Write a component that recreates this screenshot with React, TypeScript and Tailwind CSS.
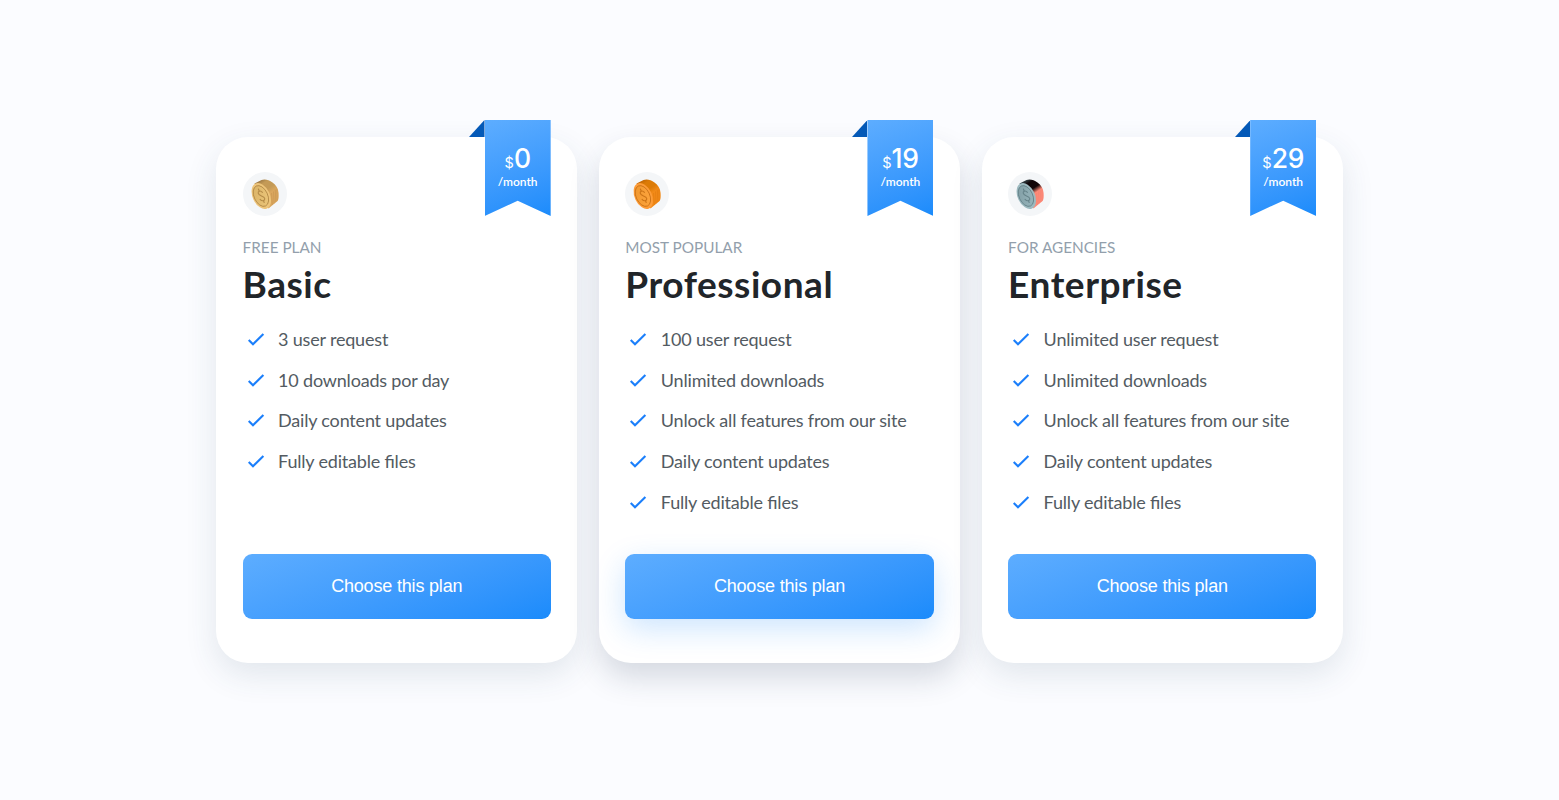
import { useId } from "react";

type CoinTheme = {
  rimStart: string;
  rimMid: string;
  rimEnd: string;
  faceLight: string;
  face: string;
  line: string;
  ridge: string;
  edge: string;
};

type Plan = {
  label: string;
  name: string;
  price: string;
  features: string[];
  coin: CoinTheme;
  featured?: boolean;
};

const plans: Plan[] = [
  {
    label: "FREE PLAN",
    name: "Basic",
    price: "0",
    features: ["3 user request", "10 downloads por day", "Daily content updates", "Fully editable files"],
    coin: { rimStart: "#8d6c3d", rimMid: "#c49a56", rimEnd: "#dba75e", faceLight: "#edc77b", face: "#d9b266", line: "#a87d3c", ridge: "#b48445", edge: "#edc47a" },
  },
  {
    label: "MOST POPULAR",
    name: "Professional",
    price: "19",
    features: ["100 user request", "Unlimited downloads", "Unlock all features from our site", "Daily content updates", "Fully editable files"],
    coin: { rimStart: "#b65f04", rimMid: "#dc7b06", rimEnd: "#f28a18", faceLight: "#ffa640", face: "#ee962d", line: "#c0690f", ridge: "#d26d07", edge: "#fd9c38" },
    featured: true,
  },
  {
    label: "FOR AGENCIES",
    name: "Enterprise",
    price: "29",
    features: ["Unlimited user request", "Unlimited downloads", "Unlock all features from our site", "Daily content updates", "Fully editable files"],
    coin: { rimStart: "#486267", rimMid: "#100608", rimEnd: "#ff8a78", faceLight: "#9bb9bf", face: "#7f9ca3", line: "#5c797f", ridge: "#e88072", edge: "#9dbac0" },
  },
];

function Coin({ theme }: { theme: CoinTheme }) {
  const id = useId();
  return (
    <svg className="block h-11 w-11" viewBox="0 0 44 44" aria-hidden="true">
      <defs>
        <linearGradient id={`${id}rim`} gradientUnits="userSpaceOnUse" x1="14" y1="8" x2="31" y2="34">
          <stop stopColor={theme.rimStart} />
          <stop offset=".2" stopColor={theme.rimMid} />
          <stop offset=".42" stopColor={theme.rimMid} />
          <stop offset=".58" stopColor={theme.rimEnd} />
          <stop offset="1" stopColor={theme.rimEnd} />
        </linearGradient>
        <linearGradient id={`${id}face`} x1="0" y1="0" x2="1" y2="1">
          <stop stopColor={theme.face} />
          <stop offset="1" stopColor={theme.faceLight} />
        </linearGradient>
      </defs>
      <path d="M11.5 11.6 18.5 8.1c3-1.4 7.5-.3 11 2.4 3.5 2.6 5.8 6 6.1 10.5.2 3.5.2 6.2-1 8.1L25.5 36.4z" fill={`url(#${id}rim)`} />
      <path d="m28.5 21 .8 12m1.2-13.5.6 12m1.2-14 .5 12.5m1.1-13.5.3 12" stroke={theme.ridge} strokeWidth=".6" opacity=".5" />
      <ellipse cx="18.3" cy="24" rx="8.6" ry="13.7" transform="rotate(-25 18.3 24)" fill={theme.edge} />
      <ellipse cx="17.9" cy="24" rx="6.8" ry="11" transform="rotate(-25 17.9 24)" fill={`url(#${id}face)`} stroke={theme.line} strokeWidth=".7" />
      <path d="m15.4 17 .8 2m4.2 9.5.8 2M19.4 20.4c-1.7-2.1-4.6-1.6-4.2.8.6 3.2 5.7 2.2 6.5 5.2.5 2.4-2.6 3.2-4.6.9" fill="none" stroke={theme.line} strokeWidth="1.1" strokeLinecap="round" opacity=".8" />
    </svg>
  );
}

function Ribbon({ price }: { price: string }) {
  return (
    <div className="absolute -top-[17px] right-[26.6px] flex items-start">
      <svg className="block h-[17px] w-[15.5px]" viewBox="0 0 15 17" preserveAspectRatio="none" aria-hidden="true">
        <path d="M15 0v17H0z" fill="#0459b7" />
      </svg>
      <div className="h-24 w-[66px] bg-linear-160 from-[#5dadff] to-[#1a8bfb] pt-[26px] text-center text-white [clip-path:polygon(0_0,100%_0,100%_100%,50%_84%,0_100%)]">
        <div className="flex h-6 items-baseline justify-center font-['Inter',sans-serif] leading-6">
          <span className="text-[14.5px]">$</span>
          <span className="text-[26.5px] font-medium tracking-[-0.3px]">{price}</span>
        </div>
        <div className="text-[12px] leading-[24px] font-semibold">/month</div>
      </div>
    </div>
  );
}

function PlanCard({ plan }: { plan: Plan }) {
  return (
    <section
      className={`relative flex h-[526px] flex-col rounded-[32px] bg-white px-[26.4px] pt-[35px] pb-[44px] ${
        plan.featured ? "shadow-[0_15px_30px_rgba(30,50,75,0.17)]" : "shadow-[0_12px_32px_rgba(40,70,100,0.12)]"
      }`}
    >
      <Ribbon price={plan.price} />
      <div className="h-11 w-11 rounded-full bg-[#f4f6f8]">
        <Coin theme={plan.coin} />
      </div>
      <p className="mt-5 text-[15.3px] leading-[22px] text-[#939fac]">{plan.label}</p>
      <h2 className="mt-px text-[37px] leading-[49px] font-bold tracking-[0.55px] text-[#212529]">{plan.name}</h2>
      <ul className="mt-[10.5px] flex flex-col">
        {plan.features.map((feature) => (
          <li key={feature} className="flex h-[40.7px] items-center text-[18px] leading-7 tracking-[-0.19px] text-[#535b62] [font-feature-settings:'liga']">
            <svg className="mr-[10px] block h-[26px] w-[25.5px]" viewBox="0 0 24 24" fill="none" aria-hidden="true">
              <path d="m5.4 12.9 4 4 9.8-9.6" stroke="#1b7ffb" strokeWidth="2" />
            </svg>
            {feature}
          </li>
        ))}
      </ul>
      <button
        className={`mt-auto h-[65px] w-full shrink-0 rounded-[9px] bg-linear-160 from-[#5dadff] to-[#1a8bfb] font-['Liberation_Sans',sans-serif] text-[18px] tracking-[-0.18px] text-white ${
          plan.featured ? "shadow-[0_10px_30px_rgba(27,136,251,0.22)]" : ""
        }`}
      >
        Choose this plan
      </button>
    </section>
  );
}

export default function App() {
  return (
    <main className="flex h-screen items-center justify-center overflow-hidden bg-[#fbfcff] font-['Lato',sans-serif]">
      <div className="grid w-[1126.6px] grid-cols-3 gap-[21.7px]">
        {plans.map((plan) => (
          <PlanCard key={plan.name} plan={plan} />
        ))}
      </div>
    </main>
  );
}
